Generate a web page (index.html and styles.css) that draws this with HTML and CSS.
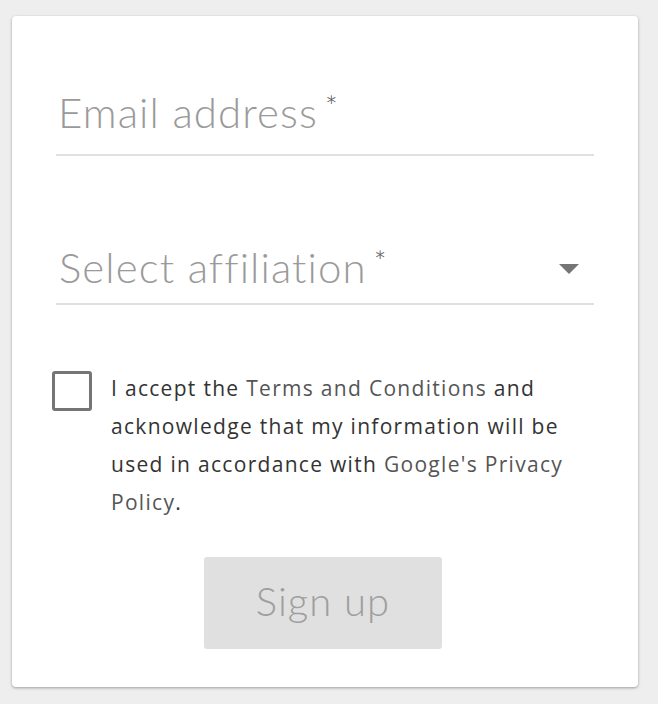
FILE: index.html
```html
<!DOCTYPE html>
<html>
<head>
<meta charset="utf-8">
<link rel="stylesheet" href="styles.css">
</head>
<body>
<div class="card">
  <div class="field email">
    <span class="label">Email address</span><span class="req">*</span>
  </div>
  <div class="field select">
    <span class="label">Select affiliation</span><span class="req">*</span>
    <span class="grow"></span>
    <svg class="arrow" width="20" height="10" viewBox="0 0 20 10"><path d="M0 0 H20 L10 10 Z" fill="#757575"/></svg>
  </div>
  <div class="consent">
    <span class="box"></span>
    <p class="terms">I accept the <a>Terms and Conditions</a> and acknowledge that my information will be used in accordance with <a>Google's Privacy Policy</a>.</p>
  </div>
  <div class="actions">
    <button class="signup">Sign up</button>
  </div>
</div>
</body>
</html>
```
FILE: styles.css
```css
html, body { margin: 0; padding: 0; }
body {
  background: #eeeeee;
  font-family: Lato, "Open Sans", sans-serif;
  width: 658px;
  height: 704px;
  overflow: hidden;
}
.card {
  margin: 16px 20px 0 12px;
  width: 626px;
  height: 671px;
  box-sizing: border-box;
  background: #fff;
  border-radius: 4px;
  box-shadow: 0 1px 3px rgba(0,0,0,0.35);
  padding: 0 44px 0 44px;
  overflow: hidden;
}
.field {
  display: flex;
  align-items: flex-start;
  border-bottom: 2px solid #e0e0e0;
}
.label {
  font-size: 42px;
  font-weight: 300;
  line-height: 48px;
  color: #9a9a9a;
  letter-spacing: 1.1px;
}
.req {
  font-size: 30px;
  color: #555;
  margin-left: 7px;
  line-height: 30px;
  margin-top: 2px;
  font-weight: 300;
}
.email { margin-top: 72px; padding-left: 2px; padding-bottom: 18px; }
.select { margin-top: 87px; padding-left: 3px; padding-bottom: 12px; }
.grow { flex: 1; }
.arrow { margin-top: 21px; margin-right: 15px; }
.consent {
  display: flex;
  align-items: flex-start;
  margin-top: 64px;
  margin-left: -4px;
}
.box {
  flex: none;
  width: 40px;
  height: 40px;
  box-sizing: border-box;
  border: 3.5px solid #757575;
  border-radius: 3px;
  margin-top: 2px;
}
.terms {
  margin: 0 0 0 19px;
  font-family: "Open Sans", Lato, sans-serif;
  font-size: 21px;
  line-height: 38px;
  letter-spacing: 1.3px;
  color: #333;
  font-weight: 400;
  max-width: 475px;
}
.terms a { color: #555; }
.actions {
  display: flex;
  justify-content: center;
  margin-top: 36px;
}
.signup {
  width: 238px;
  height: 92px;
  border: none;
  border-radius: 3px;
  background: #e0e0e0;
  color: #9e9e9e;
  font-family: Lato, "Open Sans", sans-serif;
  font-size: 40px;
  font-weight: 300;
  letter-spacing: 1px;
  padding: 0 0 5px 0;
  margin-left: -4px;
}
```
